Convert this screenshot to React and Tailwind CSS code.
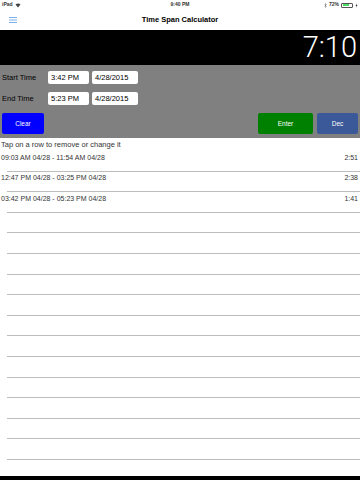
import React from "react";

const ROWS = [
  { span: "09:03 AM 04/28 - 11:54 AM 04/28", total: "2:51" },
  { span: "12:47 PM 04/28 - 03:25 PM 04/28", total: "2:38" },
  { span: "03:42 PM 04/28 - 05:23 PM 04/28", total: "1:41" },
];

const EMPTY_ROWS = 12;

const TimeInput = ({ value, width }) => (
  <div className={`h-[13px] ${width} bg-white rounded-[2px] flex items-center px-[3px] text-[7.5px] text-black`}>
    {value}
  </div>
);

const App = () => {
  const rows = [...ROWS, ...Array.from({ length: EMPTY_ROWS }, () => null)];

  return (
    <div className="w-[360px] h-[480px] bg-white flex flex-col overflow-hidden font-['Liberation_Sans',Arial,sans-serif] text-[#222]">
      {/* status bar */}
      <div className="h-[10px] flex items-center justify-between px-[2px] text-[5px] text-[#333]">
        <div className="flex items-center gap-[2px] w-[60px]">
          <span className="font-bold">iPad</span>
          <svg width="6" height="5" viewBox="0 0 12 10">
            <path d="M6 9 L1 3 Q6 -1 11 3 Z" fill="#444" />
          </svg>
        </div>
        <span className="font-bold">9:40 PM</span>
        <div className="flex items-center justify-end gap-[2px] w-[60px]">
          <svg width="3" height="5" viewBox="0 0 6 10">
            <path d="M1 3 L5 7 L3 9 V1 L5 3 L1 7" fill="none" stroke="#555" strokeWidth="0.9" />
          </svg>
          <span className="font-bold">72%</span>
          <div className="w-[12px] h-[5px] border-[0.5px] border-[#555] rounded-[1px] p-[0.5px]">
            <div className="w-[72%] h-full bg-[#4cd964]" />
          </div>
          <svg width="3" height="5" viewBox="0 0 6 10">
            <path d="M4 0 L1 6 H3 L2 10 L5 4 H3 Z" fill="#333" />
          </svg>
        </div>
      </div>

      {/* nav bar */}
      <div className="h-[20px] relative flex items-center justify-center">
        <svg className="absolute left-[9px] top-[7px]" width="8" height="6" viewBox="0 0 8 6">
          <rect x="0" y="0" width="8" height="0.8" fill="#5b9be6" />
          <rect x="0" y="2.6" width="8" height="0.8" fill="#5b9be6" />
          <rect x="0" y="5.2" width="8" height="0.8" fill="#5b9be6" />
        </svg>
        <span className="text-[7.5px] font-bold text-black">Time Span Calculator</span>
      </div>

      {/* total */}
      <div className="h-[35px] bg-black flex items-center justify-end pr-[3px]">
        <span className="text-[29px] leading-none font-light text-white font-['Roboto',sans-serif]">7:10</span>
      </div>

      {/* inputs */}
      <div className="h-[73px] bg-[#808080] flex flex-col pt-[6px] px-[2px]">
        <div className="flex items-center h-[13px]">
          <span className="w-[46px] text-[7.5px] text-black">Start Time</span>
          <TimeInput value="3:42 PM" width="w-[41px]" />
          <div className="w-[3px]" />
          <TimeInput value="4/28/2015" width="w-[46px]" />
        </div>
        <div className="flex items-center h-[13px] mt-[8px]">
          <span className="w-[46px] text-[7.5px] text-black">End Time</span>
          <TimeInput value="5:23 PM" width="w-[41px]" />
          <div className="w-[3px]" />
          <TimeInput value="4/28/2015" width="w-[46px]" />
        </div>
        <div className="flex items-center mt-[8px] h-[21px]">
          <button className="w-[42px] h-full bg-[#0000ff] rounded-[2px] text-white text-[6.5px]">Clear</button>
          <div className="flex-1" />
          <button className="w-[55px] h-full bg-[#008000] rounded-[2px] text-white text-[6.5px]">Enter</button>
          <button className="w-[41px] h-full bg-[#3b5998] rounded-[2px] text-white text-[6.5px] ml-[4px]">Dec</button>
        </div>
      </div>

      {/* list */}
      <div className="h-[13px] flex items-center px-[1px] text-[7.5px] text-[#333]">
        Tap on a row to remove or change it
      </div>
      {rows.map((row, i) => (
        <div key={i} className="h-[20.6px] flex flex-col">
          <div className="h-[14px] flex items-center justify-between px-[1px] pr-[2px] text-[7px] text-[#333]">
            <span>{row ? row.span : ""}</span>
            <span>{row ? row.total : ""}</span>
          </div>
          <div className="mt-auto ml-[7px] h-px bg-[#bdbdbd]" />
        </div>
      ))}
      <div className="flex-1" />
      <div className="h-[4px] bg-black" />
    </div>
  );
};

export default App;
